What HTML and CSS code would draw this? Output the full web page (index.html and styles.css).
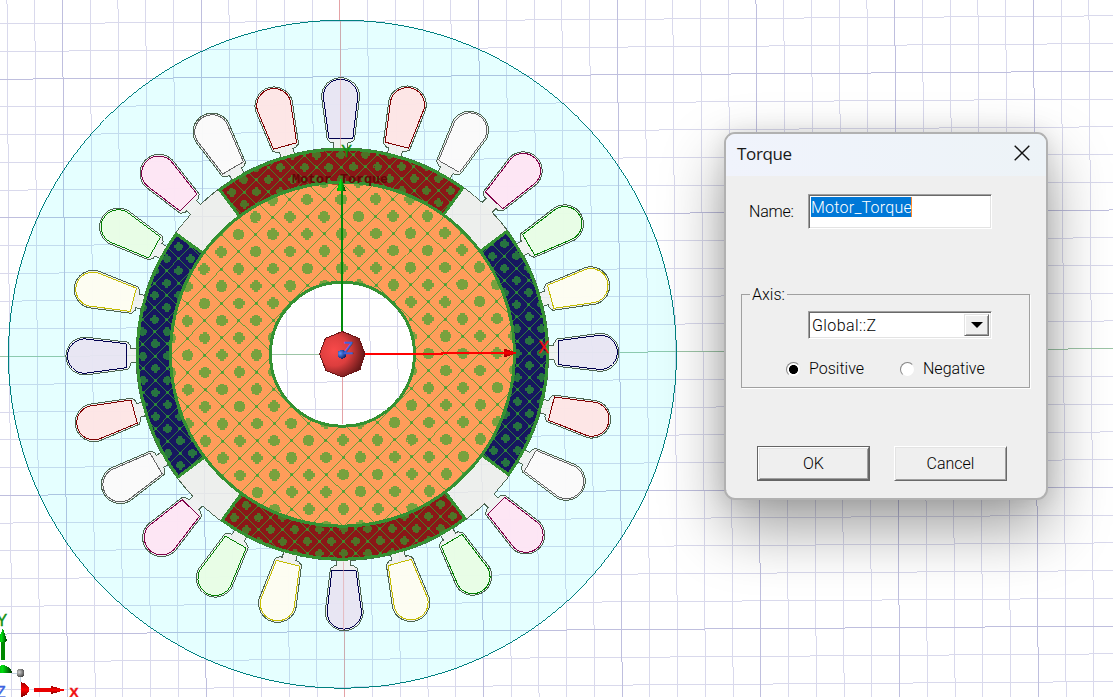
FILE: index.html
```
<!DOCTYPE html>
<html lang="en">
<head>
<meta charset="utf-8">
<title>Torque</title>
<link rel="stylesheet" href="styles.css">
</head>
<body>
<main class="workspace">
<svg class="model" width="1113" height="697" viewBox="0 0 1113 697">
  <defs>
    <path id="slot" d="M-7-206.2V-211.6L-9.5-211.6L-13.6-214.5L-19-257.5A19 19 0 0 1 19-257.5L13.6-214.5L9.5-211.6H7V-206.2A206.3 206.3 0 0 1 46.6-201"/>
    <path id="coil" d="M-12-216L-17.2-257.7A17.2 17.2 0 0 1 17.2-257.7L12-216Z"/>
    <path id="magnet" d="M-121.4-165.2A205 205 0 0 1 121.4-165.2L101.8-138.6A172 172 0 0 0-101.8-138.6Z"/>
    <path id="rotor" fill-rule="evenodd" clip-rule="evenodd" d="M-172 0A172 172 0 0 1 172 0A172 172 0 0 1-172 0ZM-72 0A72 72 0 0 0 72 0A72 72 0 0 0-72 0Z"/>
    <clipPath id="clip-top"><use href="#magnet"/></clipPath>
    <clipPath id="clip-right"><use href="#magnet" transform="rotate(90)"/></clipPath>
    <clipPath id="clip-bottom"><use href="#magnet" transform="rotate(180)"/></clipPath>
    <clipPath id="clip-left"><use href="#magnet" transform="rotate(270)"/></clipPath>
    <clipPath id="clip-rotor"><use href="#rotor"/></clipPath>
    <radialGradient id="ball" cx=".32" cy=".42" r=".75"><stop offset="0" stop-color="#f84a4a"/><stop offset=".45" stop-color="#dc3e3e"/><stop offset="1" stop-color="#4c1010"/></radialGradient>
    <radialGradient id="blue" cx=".3" cy=".4" r=".7"><stop offset="0" stop-color="#5c94ff"/><stop offset="1" stop-color="#0c1c60"/></radialGradient>
    <radialGradient id="gray" cx=".35" cy=".4" r=".7"><stop offset="0" stop-color="#d0d0d0"/><stop offset="1" stop-color="#404040"/></radialGradient>
    <linearGradient id="redcone" x2="0" y2="1"><stop offset="0" stop-color="#900"/><stop offset=".5" stop-color="#f00"/><stop offset="1" stop-color="#700"/></linearGradient>
    <linearGradient id="greencone"><stop offset="0" stop-color="#0a0"/><stop offset=".4" stop-color="#0d1"/><stop offset="1" stop-color="#030"/></linearGradient>
  </defs>

  <g class="crisp" transform="translate(342.4 354.2) rotate(-.41)">
    <path id="grid-minor" class="grid-minor"/>
    <path id="grid-major" class="grid-major"/>
    <path class="axis-y" d="M0-400V400"/>
    <path class="axis-x" d="M-400 0H800"/>
    <circle class="region" r="334"/>
    <g class="slots">
      <use href="#slot"/><use href="#slot" transform="rotate(15)"/><use href="#slot" transform="rotate(30)"/><use href="#slot" transform="rotate(45)"/><use href="#slot" transform="rotate(60)"/><use href="#slot" transform="rotate(75)"/>
      <use href="#slot" transform="rotate(90)"/><use href="#slot" transform="rotate(105)"/><use href="#slot" transform="rotate(120)"/><use href="#slot" transform="rotate(135)"/><use href="#slot" transform="rotate(150)"/><use href="#slot" transform="rotate(165)"/>
      <use href="#slot" transform="rotate(180)"/><use href="#slot" transform="rotate(195)"/><use href="#slot" transform="rotate(210)"/><use href="#slot" transform="rotate(225)"/><use href="#slot" transform="rotate(240)"/><use href="#slot" transform="rotate(255)"/>
      <use href="#slot" transform="rotate(270)"/><use href="#slot" transform="rotate(285)"/><use href="#slot" transform="rotate(300)"/><use href="#slot" transform="rotate(315)"/><use href="#slot" transform="rotate(330)"/><use href="#slot" transform="rotate(345)"/>
    </g>
    <circle class="bore" r="205.8"/>
    <g class="coil navy"><use href="#coil"/><use href="#coil" transform="rotate(90)"/><use href="#coil" transform="rotate(180)"/><use href="#coil" transform="rotate(270)"/></g>
    <g class="coil red"><use href="#coil" transform="rotate(15)"/><use href="#coil" transform="rotate(105)"/><use href="#coil" transform="rotate(255)"/><use href="#coil" transform="rotate(345)"/></g>
    <g class="coil white"><use href="#coil" transform="rotate(30)"/><use href="#coil" transform="rotate(120)"/><use href="#coil" transform="rotate(240)"/><use href="#coil" transform="rotate(330)"/></g>
    <g class="coil pink"><use href="#coil" transform="rotate(45)"/><use href="#coil" transform="rotate(135)"/><use href="#coil" transform="rotate(225)"/><use href="#coil" transform="rotate(315)"/></g>
    <g class="coil green"><use href="#coil" transform="rotate(60)"/><use href="#coil" transform="rotate(150)"/><use href="#coil" transform="rotate(210)"/><use href="#coil" transform="rotate(300)"/></g>
    <g class="coil yellow"><use href="#coil" transform="rotate(75)"/><use href="#coil" transform="rotate(165)"/><use href="#coil" transform="rotate(195)"/><use href="#coil" transform="rotate(285)"/></g>

    <g fill="#8b1717"><use href="#magnet"/><use href="#magnet" transform="rotate(180)"/></g>
    <g fill="#171760"><use href="#magnet" transform="rotate(90)"/><use href="#magnet" transform="rotate(270)"/></g>
    <g clip-path="url(#clip-top)" class="hatch" data-x="0" data-y="-199.3" data-tile="24.3" data-size="4.5"></g>
    <g clip-path="url(#clip-right)" class="hatch" data-x="162.6" data-y="-109.1" data-tile="24.3" data-size="4.5"></g>
    <g clip-path="url(#clip-bottom)" class="hatch" data-x="-12.3" data-y="187" data-tile="24.3" data-size="4.5"></g>
    <g clip-path="url(#clip-left)" class="hatch" data-x="-163" data-y="-108.8" data-tile="24.3" data-size="4.5"></g>
    <g class="edge"><use href="#magnet"/><use href="#magnet" transform="rotate(90)"/><use href="#magnet" transform="rotate(180)"/><use href="#magnet" transform="rotate(270)"/></g>
    <use href="#rotor" fill="#ff9c5a"/>
    <g clip-path="url(#clip-rotor)" class="hatch" data-x="0" data-y="17.2" data-tile="34.4" data-size="5.8"></g>
    <g class="edge"><use href="#rotor"/></g>
    <circle r="70.5" fill="#fff"/>
    <path class="grid-minor" d="M-55.5-44V44M-27.7-65V65M27.7-65V65M55.5-44V44M-44-55.5H44M-65-27.7H65M-65 27.7H65M-44 55.5H44"/>
    <path class="axis-y" d="M0 0V70"/><path class="axis-x" d="M-70 0H0"/>
  </g>
  <path class="axis-y faint crisp" d="M340.8 78V148M343.5 562V630"/>

  <text class="torque-label" x="292" y="183">Motor_Torque</text>
  <g class="crisp">
    <path d="M342 332V190" stroke="#008a0a" stroke-width="2"/>
    <path d="M341 178L346 191H336.500Z" fill="url(#greencone)"/>
    <path d="M365 354L442 354V353H507" fill="none" stroke="#f00" stroke-width="2"/>
    <path d="M504 348.500L518 353L504 357.500Z" fill="url(#redcone)"/>
    <path d="M342.300 331.500L359 338.300L365 354L360 369.500L342.300 377L326 370.500L319.500 354L325.500 338.300Z" fill="url(#ball)" stroke="#681616"/>
    <circle cx="342" cy="354.200" r="4.500" fill="url(#blue)"/>
  </g>
  <g class="axis-label">
    <text x="343.500" y="353.500" class="z">Z</text>
    <text x="538.500" y="353" class="x">X</text>
    <text x="341.200" y="157" class="y">Y</text>
    <text x="-3.500" y="625.500" class="y">Y</text>
    <text x="69.500" y="696.500" class="x bold">X</text>
    <text x="-4" y="697.500" class="z">Z</text>
  </g>
  <g class="crisp">
    <path d="M3 660V640" stroke="#080" stroke-width="3.500"/>
    <path d="M3 628L7 641Q3 644-2 641Z" fill="url(#greencone)"/>
    <path d="M12 673H20V682" fill="none" stroke="#c5d4e1"/>
    <path d="M-4 673Q-3 665 4 665Q11 667 12 673Z" fill="url(#greencone)"/>
    <circle cx="20.500" cy="673" r="4" fill="url(#gray)"/>
    <path d="M21 682Q29 684 29 690Q28 696 21 697Z" fill="url(#redcone)"/>
    <path d="M34 690H52" stroke="#e80000" stroke-width="3.500"/>
    <path d="M51 686L66 690L51 694Z" fill="url(#redcone)"/>
  </g>
</svg>

<section class="dialog">
  <header class="titlebar">
    <span class="title">Torque</span>
    <svg class="close" width="16" height="16" viewBox="0 0 16 16"><path d="M.7.7L15.300 15.300M15.300.7L.7 15.300"/></svg>
  </header>
  <div class="name-row">
    <span class="name-label">Name:</span>
    <div class="field name-field"><span class="selected">Motor_Torque</span></div>
  </div>
  <fieldset class="axis-group">
    <legend>Axis:</legend>
    <div class="field combo">
      <span class="combo-text">Global::Z</span>
      <span class="combo-button"><svg width="12" height="6" viewBox="0 0 12 6"><path d="M0 0H12L6 6Z"/></svg></span>
    </div>
    <div class="radios">
      <span class="radio"><i class="dial checked"></i><span>Positive</span></span>
      <span class="radio"><i class="dial"></i><span>Negative</span></span>
    </div>
  </fieldset>
  <footer class="actions">
    <span class="button primary"><b class="face">OK</b></span>
    <span class="button"><b class="face">Cancel</b></span>
  </footer>
</section>
</main>
<script src="model.js"></script>
</body>
</html>
```
FILE: styles.css
```
* { box-sizing: border-box; }
body { margin: 0; background: #fff; overflow: hidden; }
.workspace { position: relative; width: 1113px; height: 697px; overflow: hidden; }
.model { display: block; }
.crisp { shape-rendering: crispEdges; }
.grid-minor { stroke: #d9d9ec; stroke-width: 1; fill: none; }
.grid-major { stroke: #bfbfde; stroke-width: 1; }
.axis-y { stroke: #e4a2a6; stroke-width: 1; }
.axis-x { stroke: #9cc4a6; stroke-width: 1; }
.faint { opacity: .6; }
.region { fill: rgba(0, 255, 255, .1); stroke: #008080; }
.slots { fill: rgba(240, 238, 236, .8); stroke: #4b6450; }
.bore { fill: rgba(238, 236, 234, .84); }
.coil { stroke-width: 1; }
.navy { fill: rgba(230, 228, 244, .8); stroke: #000050; }
.red { fill: rgba(255, 228, 228, .85); stroke: #800000; }
.white { fill: rgba(252, 252, 252, .85); stroke: #646464; }
.pink { fill: rgba(255, 228, 244, .85); stroke: #800048; }
.green { fill: rgba(230, 255, 228, .85); stroke: #008000; }
.yellow { fill: rgba(255, 255, 242, .85); stroke: #c4bc00; }
.hatch-line { fill: none; stroke: #34a030; stroke-width: 1; stroke-opacity: .5; }
.hatch-dot { fill: #30a430; fill-opacity: .65; }
.edge { fill: none; stroke: #349232; stroke-width: 3; }
.torque-label { font: bold 13.33px "Liberation Mono", monospace; fill: #640606; }
.axis-label { font: 16px "Liberation Sans", sans-serif; stroke-width: .4; }
.axis-label .x { fill: #f01010; stroke: #f01010; }
.axis-label .y { fill: #109010; stroke: #109010; }
.axis-label .z { fill: #3d62df; stroke: #3d62df; }
.axis-label .bold { font-size: 13.5px; font-weight: bold; }

/* floating window */
.dialog {
  position: absolute; left: 724px; top: 132px; width: 324px; height: 368px;
  display: flex; flex-direction: column;
  border: 2px solid #b1b1b1; border-radius: 11px; background: #efefef; background-clip: padding-box;
  box-shadow: 0 28px 62px rgba(0, 0, 0, .38), 0 0 22px rgba(0, 0, 0, .1);
  font: 300 16px Roboto, "Liberation Sans", sans-serif; color: #000; line-height: 20px;
}
.titlebar {
  height: 42px; padding: 0 16px 4px 11px; display: flex; align-items: center; justify-content: space-between;
  border-radius: 9px 9px 0 0; background: linear-gradient(90deg, #f0f3fc, #edf3f7);
}
.title { font: 400 17px "Open Sans", sans-serif; letter-spacing: -.35px; color: #191919; }
.close { fill: none; stroke: #111; stroke-width: 1.4; }
.name-row { display: flex; align-items: flex-start; padding: 18px 0 0 23px; height: 98px; }
.name-label { width: 59px; padding-top: 8px; letter-spacing: -.2px; }
.field { width: 184px; background: #fff; border: 1px solid #a0a0a0; border-right-color: #fff; border-bottom-color: #fff; box-shadow: inset 1px 1px #696969, inset -1px -1px #e3e3e3; }
.name-field { height: 35px; padding: 2px; }
.selected { display: inline-block; height: 20px; padding-top: 1px; background: #0078d7; color: #fff; width: 101px; padding-left: 0; letter-spacing: .25px; border-right: 1px solid #ff8728; }
.axis-group {
  margin: 10px 0 0 15px; width: 289px; height: 104px; padding: 7px 0 0 66px; min-width: 0;
  border: 1px solid #a0a0a0; box-shadow: 1px 1px #fff;
}
.axis-group legend { margin-left: -58px; padding: 1px 2px 0; height: 20px; }
.combo { display: flex; height: 28px; padding: 2px; align-items: stretch; justify-content: space-between; }
.combo-text { padding: 2px 0 0 1px; letter-spacing: .4px; }
.combo-button { width: 25px; display: flex; align-items: center; justify-content: center; background: #efefef; border: 1px solid #e3e3e3; border-right-color: #696969; border-bottom-color: #696969; box-shadow: inset 1px 1px #fff, inset -1px -1px #a0a0a0; }
.radios { display: flex; margin: 20px 0 0 -22px; }
.radio { display: flex; width: 114px; align-items: center; gap: 8px; }
.dial { width: 15px; height: 15px; border-radius: 50%; background: #fff; border: 1.500px solid; border-color: #858585 #eee #eee #858585; }
.checked { background: radial-gradient(circle, #000 0 4.200px, #fff 4.800px); }
.actions { display: flex; gap: 24px; margin: 58px 0 0 31px; }
.button { width: 113px; height: 35px; display: flex; }
.face { flex: 1; display: flex; align-items: center; justify-content: center; font-weight: 300; border: 1px solid #fff; border-right-color: #696969; border-bottom-color: #696969; box-shadow: inset 1px 1px #e3e3e3, inset -1px -1px #a0a0a0; }
.primary { border: 1px solid #646464; }
```
FILE: model.js
```
// Drawing grid: every fifth line is a major one.
const step = 27.74;
let minor = '', major = '';
for (let i = -15; i <= 30; i++) {
  if (i === 0) continue;
  const p = (i * step).toFixed(2);
  const lines = `M${p}-400V400` + (Math.abs(i) < 15 ? `M-400 ${p}H800` : '');
  if (i % 5 === 0) major += lines; else minor += lines;
}
document.getElementById('grid-minor').setAttribute('d', minor);
document.getElementById('grid-major').setAttribute('d', major);

// Selection hatch: diamonds around stepped dots, clipped to each part.
document.querySelectorAll('.hatch').forEach(group => {
  const x0 = +group.dataset.x, y0 = +group.dataset.y;
  const tile = +group.dataset.tile, size = +group.dataset.size;
  const half = tile / 2, body = size - 1.5, nub = size * 0.36;
  let lines = '', dots = '';
  for (let i = -32; i <= 32; i++) {
    for (let j = -32; j <= 32; j++) {
      const x = x0 + i * half, y = y0 + j * half;
      if (Math.hypot(x, y) > 225) continue;
      if ((i + j) % 2 === 0) {
        dots += `M${x - body} ${y - body}h${2 * body}v${2 * body}h${-2 * body}Z`
          + `M${x - nub} ${y - size}h${2 * nub}v${size - body}h${-2 * nub}Z`
          + `M${x - nub} ${y + body}h${2 * nub}v${size - body}h${-2 * nub}Z`
          + `M${x - size} ${y - nub}h${size - body}v${2 * nub}h${body - size}Z`
          + `M${x + body} ${y - nub}h${size - body}v${2 * nub}h${body - size}Z`;
        lines += `M${x} ${y - half}L${x + half} ${y}L${x} ${y + half}M${x} ${y - half}L${x - half} ${y}L${x} ${y + half}`;
      } else {
        dots += `M${x - 1.5} ${y - 1.5}h3v3h-3Z`;
      }
    }
  }
  group.innerHTML = `<path class="hatch-line" d="${lines}"/><path class="hatch-dot" d="${dots}"/>`;
});
```
